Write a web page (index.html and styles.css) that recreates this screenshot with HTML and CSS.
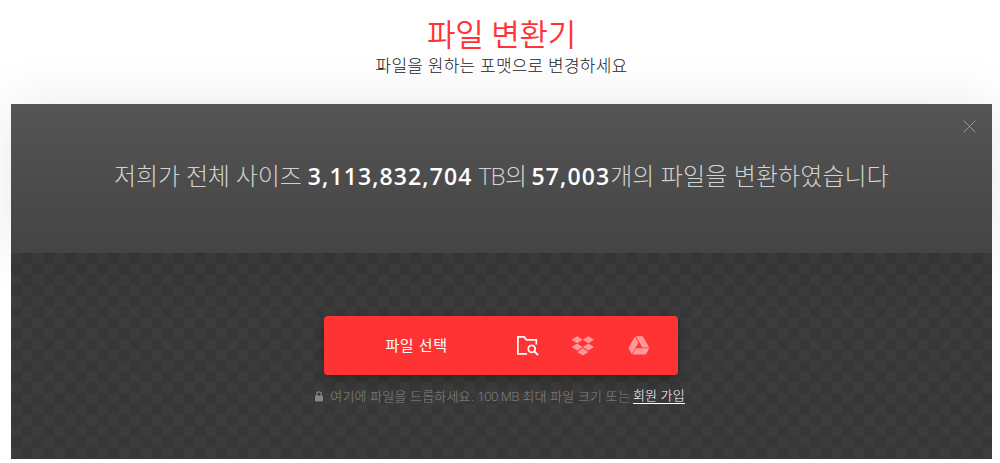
FILE: index.html
```
<!DOCTYPE html>
<html lang="ko">
<head>
    <meta charset="UTF-8">
    <meta name="viewport" content="width=device-width, initial-scale=1.0">
    <title>파일 변환기</title>
    <link rel="stylesheet" href="styles.css">
</head>
<body>
    <header>
        <h1>파일 변환기</h1>
        <p class="subtitle">파일을 원하는 포맷으로 변경하세요</p>
    </header>

    <main class="converter">
        <section class="banner">
            <p class="stats"><span class="stats-start">저희가 전체 사이즈</span> <b class="size">3,113,832,704</b> <span class="unit">TB의</span> <b class="count">57,003</b><span class="stats-end">개의 파일을 변환하였습니다</span></p>
            <button class="close" aria-label="닫기">
                <svg width="13" height="13" viewBox="0 0 13 13"><path d="M.5.5l12 12M12.5.5l-12 12"/></svg>
            </button>
        </section>

        <section class="drop-area">
            <div class="picker">
                <button class="choose">파일 선택</button>
                <button class="source active" aria-label="컴퓨터">
                    <svg width="22" height="20" viewBox="0 0 22 20" fill="none" stroke="#fff" stroke-width="1.7">
                        <path d="M10 17.9H.9V.9h6.3l2.3 3h9.8v4.6"/>
                        <circle cx="14.7" cy="12.8" r="3.5"/>
                        <path d="M17.2 15.3l3.9 3.8"/>
                    </svg>
                </button>
                <button class="source" aria-label="Dropbox">
                    <svg width="24" height="20" viewBox="0 0 24 20" fill="#fff">
                        <path d="M6.2.2l5.5 3.5-5.5 3.6L.6 3.7zM17.4.2L23 3.7l-5.6 3.6-5.6-3.6zM.6 11l5.6-3.6 5.5 3.6-5.5 3.6zM17.4 7.4L23 11l-5.6 3.6-5.6-3.6zM6.2 15.9l5.6-3.6 5.5 3.6-5.5 3.6z"/>
                    </svg>
                </button>
                <button class="source" aria-label="Google Drive">
                    <svg width="22" height="19" viewBox="0 0 22 19" fill="#fff">
                        <path d="M7 .6l3.5 6.1-6.6 11.5L.4 12zM7.9.2h6.9l6.4 11.2h-6.9zM8.1 12.3h13.2l-3.5 6.2H4.6z"/>
                    </svg>
                </button>
            </div>
            <p class="hint">
                <svg class="lock" width="8" height="11" viewBox="0 0 8 11"><path d="M1.8 5V3a2.2 2.2 0 0 1 4.4 0v2" fill="none" stroke="#868686" stroke-width="1.2"/><rect y="4.5" width="8" height="6" rx=".8" fill="#868686"/></svg>
                <span class="hint-text">여기에 파일을 드롭하세요. <span class="limit">100 MB</span> 최대 파일 크기 또는</span>
                <a href="#">회원 가입</a>
            </p>
        </section>
    </main>
</body>
</html>
```
FILE: styles.css
```
body {
    margin: 0;
    background-color: #fff;
    color: #222;
    font-family: 'Open Sans', 'Noto Sans CJK KR', sans-serif;
    font-weight: 300;
    overflow: hidden;
}

header {
    height: 104px;
    padding: 14px 0 0 3px;
    box-sizing: border-box;
    text-align: center;
}

h1 {
    margin: 0;
    color: #ff3333;
    font-size: 31px;
    line-height: 40px;
    font-weight: 350;
    letter-spacing: -0.3px;
}

.subtitle {
    margin: 0;
    font-size: 17px;
    line-height: 24px;
    letter-spacing: 0.22px;
}

button {
    padding: 0;
    border: none;
    background: none;
    color: #fff;
    font-family: inherit;
    cursor: pointer;
}

svg {
    display: block;
}

.converter {
    width: 981px;
    height: 355px;
    margin-left: 11px;
    background-color: #3c3c3c;
    background-image: conic-gradient(#3c3c3c 25%, #373737 0 50%, #3c3c3c 0 75%, #373737 0);
    background-size: 21.6px 21.6px;
    background-position: 10.8px 148.8px;
}

.banner {
    position: relative;
    display: flex;
    justify-content: center;
    height: 149px;
    padding-top: 52px;
    box-sizing: border-box;
    background: linear-gradient(#555, #444);
    box-shadow: 0 0 60px rgba(0, 0, 0, 0.09);
}

.stats {
    margin: 0;
    color: #d2d2d2;
    font-size: 24px;
    line-height: 40px;
    white-space: nowrap;
}

.stats b {
    color: #fff;
    font-weight: 600;
    font-size: 23px;
    letter-spacing: 1.1px;
}

.stats-start {
    letter-spacing: -0.15px;
}

.unit {
    margin-right: -1px;
    letter-spacing: -0.7px;
}

.stats-end {
    letter-spacing: 0.1px;
}

.close {
    position: absolute;
    top: 16px;
    right: 16px;
}

.close path {
    stroke: #999;
    stroke-width: 1;
}

.drop-area {
    display: flex;
    flex-direction: column;
    align-items: center;
    padding: 63px 1px 0 0;
}

.picker {
    display: flex;
    align-items: center;
    width: 354px;
    height: 59px;
    border-radius: 4px;
    background-color: #ff3333;
    box-shadow: 0 4px 12px rgba(0, 0, 0, 0.3);
}

.choose {
    width: 185px;
    padding-bottom: 2px;
    font-size: 15px;
    font-weight: 400;
    letter-spacing: 0.6px;
}

.source {
    display: flex;
    justify-content: center;
    width: 56px;
    opacity: 0.5;
}

.source.active {
    width: 38px;
    margin-right: 8px;
    opacity: 1;
}

.hint {
    display: flex;
    align-items: center;
    margin: 11px 2px 0 0;
    color: #868686;
    font-size: 13px;
    line-height: 20px;
    white-space: nowrap;
}

.lock {
    margin-right: 7px;
}

.hint-text {
    letter-spacing: 0.16px;
}

.limit {
    letter-spacing: -0.6px;
}

.hint a {
    margin-left: 3px;
    color: #fff;
    line-height: 15px;
    border-bottom: 1px solid #fff;
    text-decoration: none;
    letter-spacing: 0.1px;
}
```
